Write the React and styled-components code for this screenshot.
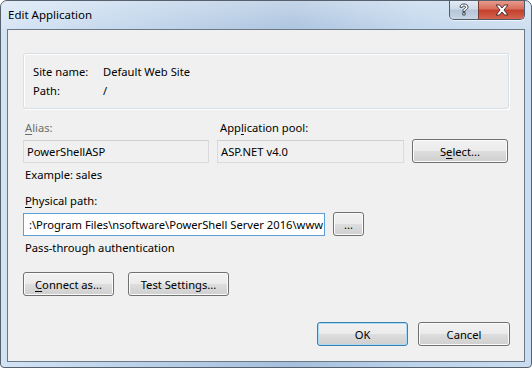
import React from "react";
import styled, { createGlobalStyle, css } from "styled-components";

const Global = createGlobalStyle`
  html, body { margin: 0; padding: 0; background: #ffffff; }
  body { font-family: "Segoe UI", "Noto Sans", sans-serif; font-size: 11.2px; color: #000; }
  * { box-sizing: border-box; }
`;

const Window = styled.div`
  width: 532px;
  height: 368px;
  display: flex;
  flex-direction: column;
  border: 1px solid #56616d;
  border-radius: 7px 7px 4px 4px;
  background:
    linear-gradient(90deg, #d3e3f4 0%, #bcd2ea 25%, #a5bfdc 55%, #bcd3eb 78%, #cadcef 100%);
  overflow: hidden;
`;

const TitleBar = styled.div`
  height: 28px;
  flex: none;
  display: flex;
  justify-content: space-between;
  align-items: flex-start;
  padding-left: 7px;
  background: linear-gradient(180deg, rgba(255,255,255,0.35) 0%, rgba(255,255,255,0.1) 100%);
`;

const Title = styled.div`
  line-height: 28px;
  font-size: 11.5px;
  color: #000;
`;

const Caption = styled.div`
  display: flex;
  margin-top: -1px;
  margin-right: 6px;
  border: 1px solid #4f5b68;
  border-top: none;
  border-radius: 0 0 5px 5px;
  overflow: hidden;
  box-shadow: 0 1px 0 rgba(255,255,255,0.6);
`;

const CapButton = styled.div`
  height: 19px;
  display: flex;
  align-items: center;
  justify-content: center;
  ${(p) =>
    p.$close
      ? css`
          width: 46px;
          background: linear-gradient(180deg, #e8a092 0%, #d9705f 45%, #c4412d 55%, #d36450 100%);
          border-left: 1px solid #7a3b33;
        `
      : css`
          width: 28px;
          background: linear-gradient(180deg, #e6eef6 0%, #cfdbe8 45%, #b6c6d8 55%, #c7d5e4 100%);
        `}
`;

const Client = styled.div`
  flex: 1;
  margin: 0 6px 5px 6px;
  border: 1px solid #6b7886;
  background: #f0f0f0;
  padding: 23px 14px 15px 15px;
  display: flex;
  flex-direction: column;
`;

const GroupBox = styled.div`
  width: 486px;
  height: 56px;
  border: 1px solid #d5dfe5;
  border-radius: 3px;
  box-shadow: inset 1px 1px 0 #ffffff, 1px 1px 0 #ffffff;
  padding: 8px 9px 7px 9px;
  display: grid;
  grid-template-columns: 70px 1fr;
  grid-auto-rows: 19px;
  align-items: center;
`;

const Text = styled.div`
  line-height: 16px;
  white-space: nowrap;
  color: ${(p) => (p.$disabled ? "#6d6d6d" : "#000")};
  padding-left: ${(p) => p.$indent ?? 2}px;
  margin-top: ${(p) => p.$mt ?? 0}px;
`;

const Key = styled.span`
  text-decoration: underline;
  text-underline-offset: 2px;
`;

const FieldGrid = styled.div`
  margin-top: 11px;
  display: grid;
  grid-template-columns: 186px 187px 96px;
  column-gap: 8px;
  row-gap: 3px;
  align-items: center;
`;

const TextBox = styled.div`
  height: 23px;
  display: flex;
  align-items: center;
  padding: 0 3px;
  white-space: nowrap;
  overflow: hidden;
  ${(p) =>
    p.$focused
      ? css`
          width: 302px;
          background: #ffffff;
          border: 1px solid #5c9ed8;
          justify-content: flex-end;
          padding: 0 1px 0 0;
        `
      : css`
          background: #f0f0f0;
          border: 1px solid #dadada;
          border-top-color: #cfcfcf;
        `}
`;

const Button = styled.div`
  height: ${(p) => p.$h ?? 24}px;
  width: ${(p) => p.$w}px;
  flex: none;
  display: flex;
  align-items: center;
  justify-content: center;
  border: 1px solid ${(p) => (p.$default ? "#3c7fb1" : "#707070")};
  border-radius: 3px;
  background: linear-gradient(180deg, #f2f2f2 0%, #ebebeb 48%, #dddddd 52%, #cfcfcf 100%);
  box-shadow: inset 0 0 0 1px ${(p) => (p.$default ? "#a8dcf6" : "#fbfbfb")};
  color: #000;
  white-space: nowrap;
`;

const PathRow = styled.div`
  margin-top: 3px;
  display: flex;
  align-items: center;
  gap: 8px;
`;

const ButtonRow = styled.div`
  margin-top: 16px;
  display: flex;
  gap: 14px;
`;

const Footer = styled.div`
  margin-top: auto;
  display: flex;
  justify-content: flex-end;
  gap: 10px;
`;

const HelpGlyph = () => (
  <svg width="12" height="14" viewBox="0 0 12 14">
    <path
      d="M2 4.2 C2 1.8 3.8 1 6 1 C8.4 1 10 2.2 10 4.1 C10 5.6 9 6.3 7.9 6.9 C7.2 7.3 7.1 7.6 7.1 8.4 L4.8 8.4 C4.8 7 5.2 6.3 6.3 5.7 C7.2 5.2 7.6 4.9 7.6 4.2 C7.6 3.5 7 3.1 6 3.1 C4.9 3.1 4.4 3.6 4.4 4.4 Z M4.8 9.6 L7.1 9.6 L7.1 12 L4.8 12 Z"
      fill="#ffffff"
      stroke="#3c4651"
      strokeWidth="1"
      strokeLinejoin="round"
    />
  </svg>
);

const CloseGlyph = () => (
  <svg width="16" height="12" viewBox="0 0 16 12">
    <path
      d="M2 1 L5.5 1 L8 4 L10.5 1 L14 1 L10 6 L14 11 L10.5 11 L8 8 L5.5 11 L2 11 L6 6 Z"
      fill="#ffffff"
      stroke="#4a3030"
      strokeWidth="1"
      strokeLinejoin="round"
    />
  </svg>
);

export default function App() {
  return (
    <>
      <Global />
      <Window>
        <TitleBar>
          <Title>Edit Application</Title>
          <Caption>
            <CapButton>
              <HelpGlyph />
            </CapButton>
            <CapButton $close>
              <CloseGlyph />
            </CapButton>
          </Caption>
        </TitleBar>
        <Client>
          <GroupBox>
            <Text $indent={0}>Site name:</Text>
            <Text $indent={0}>Default Web Site</Text>
            <Text $indent={0}>Path:</Text>
            <Text $indent={0}>/</Text>
          </GroupBox>

          <FieldGrid>
            <Text $disabled>
              <Key>A</Key>lias:
            </Text>
            <Text $indent={3}>
              App<Key>l</Key>ication pool:
            </Text>
            <div />
            <TextBox>PowerShellASP</TextBox>
            <TextBox>ASP.NET v4.0</TextBox>
            <Button $w={96} $h={24}>
              S<Key>e</Key>lect...
            </Button>
          </FieldGrid>

          <Text $mt={4}>Example: sales</Text>
          <Text $mt={10}>
            <Key>P</Key>hysical path:
          </Text>
          <PathRow>
            <TextBox $focused>:\Program Files\nsoftware\PowerShell Server 2016\www</TextBox>
            <Button $w={31}>...</Button>
          </PathRow>
          <Text $mt={4}>Pass-through authentication</Text>

          <ButtonRow>
            <Button $w={91}>
              <Key>C</Key>onnect as...
            </Button>
            <Button $w={101}>
              Test Settin<Key>g</Key>s...
            </Button>
          </ButtonRow>

          <Footer>
            <Button $w={91} $default>
              OK
            </Button>
            <Button $w={92}>Cancel</Button>
          </Footer>
        </Client>
      </Window>
    </>
  );
}
